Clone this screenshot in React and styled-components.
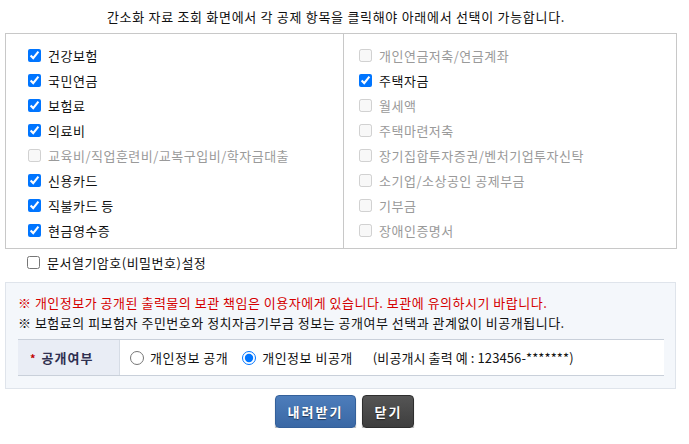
import styled, { createGlobalStyle } from "styled-components";

const GlobalStyle = createGlobalStyle`
  body {
    margin: 0;
    background: #fff;
    font-family: "Noto Sans CJK KR", "Noto Sans", sans-serif;
    font-size: 13px;
    letter-spacing: 0.5px;
    color: #111;
  }
`;

const Page = styled.div`
  width: 689px;
  padding-top: 7px;
`;

const Title = styled.p`
  margin: 0;
  width: 672px;
  text-align: center;
  line-height: 20px;
  letter-spacing: 0.7px;
  color: #111;
`;

const Wrap = styled.div`
  margin: 6px 0 0 5px;
  width: 672px;
`;

const Grid = styled.div`
  display: grid;
  grid-template-columns: 337px 1fr;
  border: 1px solid #c8c8c8;
`;

const Column = styled.div`
  padding: 9px 0 5px ${({ $pad }) => $pad}px;
  border-left: ${({ $divider }) => ($divider ? "1px solid #c8c8c8" : "none")};
`;

const Row = styled.label`
  display: flex;
  align-items: center;
  gap: 7px;
  height: 25px;
  color: ${({ $off }) => ($off ? "#9a9a9a" : "#111")};
  white-space: nowrap;
`;

const Check = styled.input.attrs({ type: "checkbox" })`
  margin: 0;
  width: 13px;
  height: 13px;
`;

const Lock = styled(Row)`
  padding-left: 22px;
  height: 26px;
`;

const Notice = styled.div`
  margin: 7px 0 0 0;
  width: 671px;
  box-sizing: border-box;
  background: #f4f7fb;
  border: 1px solid #dfe4eb;
  padding: 10px 11px 12px 12px;
`;

const Line = styled.p`
  margin: 0;
  line-height: 20px;
  color: ${({ $red }) => ($red ? "#d40000" : "#111")};
  white-space: nowrap;
`;

const OptTable = styled.div`
  display: flex;
  margin-top: 6px;
  height: 35px;
  border-top: 1px solid #c9d0da;
  border-bottom: 1px solid #c9d0da;
  background: #fff;
`;

const Head = styled.div`
  display: flex;
  align-items: center;
  gap: 5px;
  width: 102px;
  padding-left: 12px;
  box-sizing: border-box;
  background: #e9edf5;
  border-right: 1px solid #d6dce5;
  font-weight: bold;
  letter-spacing: 1px;
  color: #2f3050;
`;

const Star = styled.span`
  color: #c00000;
  font-size: 11px;
`;

const Cell = styled.div`
  display: flex;
  align-items: center;
  padding-left: 10px;
  white-space: nowrap;
`;

const RadioLabel = styled.label`
  display: flex;
  align-items: center;
  gap: 6px;
  margin-right: 14px;
`;

const Radio = styled.input.attrs({ type: "radio" })`
  margin: 0;
  width: 14px;
  height: 14px;
`;

const Example = styled.span`
  margin-left: 6px;
  letter-spacing: 0.1px;
`;

const Buttons = styled.div`
  display: flex;
  justify-content: center;
  gap: 6px;
  margin-top: 6px;
  width: 689px;
`;

const Btn = styled.button`
  height: 33px;
  padding: 0 ${({ $wide }) => ($wide ? 12 : 11)}px;
  border-radius: 4px;
  border: 1px solid ${({ $dark }) => ($dark ? "#2e2e2e" : "#34609a")};
  background: ${({ $dark }) =>
    $dark
      ? "linear-gradient(#555, #3e3e3e)"
      : "linear-gradient(#4d7dbb, #3a68a5)"};
  box-shadow: 0 2px 1px rgba(0, 0, 0, 0.35);
  color: #fff;
  font-family: inherit;
  font-size: 13px;
  font-weight: bold;
  letter-spacing: 2px;
  text-shadow: 0 1px 1px rgba(0, 0, 0, 0.5);
  cursor: pointer;
`;

const left = [
  ["건강보험", true],
  ["국민연금", true],
  ["보험료", true],
  ["의료비", true],
  ["교육비/직업훈련비/교복구입비/학자금대출", false],
  ["신용카드", true],
  ["직불카드 등", true],
  ["현금영수증", true],
];

const right = [
  ["개인연금저축/연금계좌", false],
  ["주택자금", true],
  ["월세액", false],
  ["주택마련저축", false],
  ["장기집합투자증권/벤처기업투자신탁", false],
  ["소기업/소상공인 공제부금", false],
  ["기부금", false],
  ["장애인증명서", false],
];

const Items = ({ list }) =>
  list.map(([name, on]) => (
    <Row key={name} $off={!on}>
      <Check defaultChecked={on} disabled={!on} />
      {name}
    </Row>
  ));

export default function App() {
  return (
    <Page>
      <GlobalStyle />
      <Title>간소화 자료 조회 화면에서 각 공제 항목을 클릭해야 아래에서 선택이 가능합니다.</Title>
      <Wrap>
        <Grid>
          <Column $pad={22}>
            <Items list={left} />
          </Column>
          <Column $pad={15} $divider>
            <Items list={right} />
          </Column>
        </Grid>
        <Lock>
          <Check />
          문서열기암호(비밀번호)설정
        </Lock>
        <Notice>
          <Line $red>※ 개인정보가 공개된 출력물의 보관 책임은 이용자에게 있습니다. 보관에 유의하시기 바랍니다.</Line>
          <Line>※ 보험료의 피보험자 주민번호와 정치자금기부금 정보는 공개여부 선택과 관계없이 비공개됩니다.</Line>
          <OptTable>
            <Head>
              <Star>*</Star>
              공개여부
            </Head>
            <Cell>
              <RadioLabel>
                <Radio name="open" />
                개인정보 공개
              </RadioLabel>
              <RadioLabel>
                <Radio name="open" defaultChecked />
                개인정보 비공개
              </RadioLabel>
              <Example>(비공개시 출력 예 : 123456-*******)</Example>
            </Cell>
          </OptTable>
        </Notice>
      </Wrap>
      <Buttons>
        <Btn $wide>내려받기</Btn>
        <Btn $dark>닫기</Btn>
      </Buttons>
    </Page>
  );
}
